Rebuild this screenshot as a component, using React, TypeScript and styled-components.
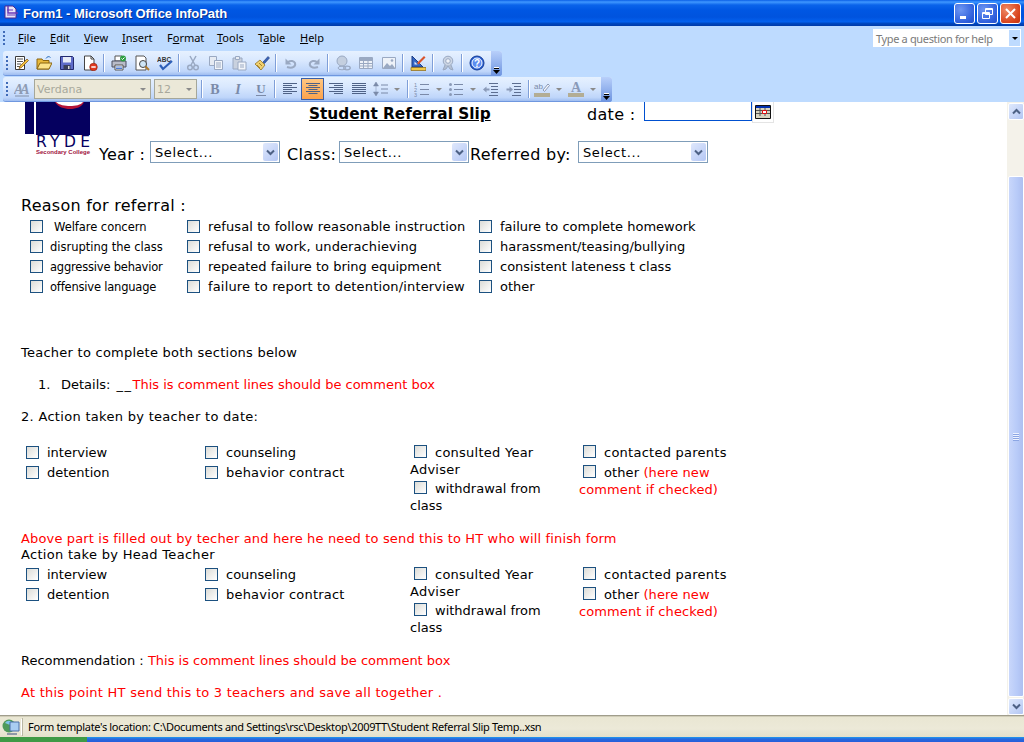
import React from "react";
import styled, { createGlobalStyle } from "styled-components";

const Global = createGlobalStyle`
  html, body { margin: 0; padding: 0; background: #fff; }
  #root { width: 1024px; height: 742px; overflow: hidden; }
`;

const Win = styled.div`
  width: 1024px; height: 742px; display: flex; flex-direction: column; overflow: hidden;
  font-family: "DejaVu Sans", Verdana, sans-serif; color: #000; background: #fff;
`;
const TitleBar = styled.div`
  height: 26px; flex: none; display: flex; align-items: center; padding: 0 3px 0 3px; box-sizing: border-box;
  background: linear-gradient(180deg,#0a5fe6 0,#3f97ff 2px,#0a63ea 5px,#0057e3 10px,#0053de 17px,#0461ef 22px,#0049c4 23px,#003aa8 26px);
`;
const TitleText = styled.span`
  margin-left: 4px; flex: 1; color: #fff; font: bold 13px "Liberation Sans", sans-serif; letter-spacing: -.05px;
  text-shadow: 1px 1px 0 #0a2f8c;
`;
const WinBtn = styled.div<{ $red?: boolean }>`
  width: 21px; height: 21px; margin-left: 2px; box-sizing: border-box; border: 1px solid #fff; border-radius: 3px;
  display: flex; align-items: center; justify-content: center;
  background: ${p => p.$red ? "radial-gradient(circle at 30% 30%,#ef8a66,#d8431c 70%,#c23210)" : "radial-gradient(circle at 30% 30%,#6d96f2,#2f5fdc 70%,#2450c8)"};
`;
const MenuBar = styled.div`
  height: 25px; flex: none; display: flex; align-items: center; background: #bedbff; position: relative; box-sizing: border-box; padding-bottom: 2px;
`;
const Grip = styled.div`
  width: 2px; height: 14px; margin: 0 1px 0 3px; flex: none;
  background: repeating-linear-gradient(180deg,#3f6bb8 0,#3f6bb8 2px,transparent 2px,transparent 4px);
`;
const MenuList = styled.div`display: flex; margin-left: 12px;`;
const MenuItem = styled.span<{ $w: number }>`
  width: ${p => p.$w}px; font: 11px "Noto Sans", sans-serif; flex: none; color: #000;
  u { text-decoration: underline; }
`;
const HelpBox = styled.div`
  position: absolute; left: 873px; top: 3px; width: 148px; height: 18px; background: #fff; display: flex; align-items: center;
  font: 11px "Noto Sans", sans-serif; letter-spacing: -.35px; color: #7a7a7a; box-sizing: border-box; padding-left: 3px;
`;
const HelpArrow = styled.div`
  margin-left: auto; margin-right: 1px; width: 11px; height: 16px; background: #bedbff; display: flex; align-items: center; justify-content: center;
`;
const Bars = styled.div`
  height: 51px; flex: none; background: #bedbff; display: flex; flex-direction: column; gap: 1px; align-items: flex-start; padding-left: 3px;
`;
const ToolBar = styled.div<{ $w: number }>`
  width: ${p => p.$w}px; height: 25px; flex: none; box-sizing: border-box; display: flex; align-items: center; position: relative;
  background: linear-gradient(180deg,#e6f1ff 0,#d9e8fe 40%,#bfd6fa 85%,#9fbdf0 100%);
  border-bottom: 1px solid #6f97df; border-radius: 3px;
`;
const Btn = styled.div<{ $on?: boolean; $w?: number }>`
  width: ${p => p.$w ?? 23}px; height: 22px; flex: none; display: flex; align-items: center; justify-content: center; box-sizing: border-box;
  ${p => p.$on ? "background: linear-gradient(180deg,#ffc782,#fca24b); border: 1px solid #3a5fa8;" : ""}
`;
const Sep = styled.div<{ $w?: number }>`
  width: ${p => p.$w ?? 7}px; height: 18px; flex: none; position: relative;
  &::after { content: ""; position: absolute; left: 50%; top: 0; bottom: 0; width: 1px; margin-left: -1px; background: #7f9fd8; box-shadow: 1px 0 0 #fff; }
`;
const Overflow = styled.div`
  position: absolute; right: 0; top: 0; bottom: -1px; width: 11px; border-radius: 0 3px 3px 0;
  background: linear-gradient(180deg,#b8cffa,#6d94e0); display: flex; align-items: flex-end; justify-content: center; padding-bottom: 2px; box-sizing: border-box;
`;
const FontBox = styled.div<{ $w: number }>`
  width: ${p => p.$w}px; height: 20px; flex: none; box-sizing: border-box; background: #ebe8d8; border: 1px solid #a5a79a; margin-right: 3px;
  display: flex; align-items: center; justify-content: space-between; padding: 0 4px 0 2px; font: 11px "DejaVu Sans", sans-serif; color: #a8a89c;
`;
const Tri = styled.span<{ $c?: string }>`
  width: 0; height: 0; border-left: 3px solid transparent; border-right: 3px solid transparent; border-top: 3px solid ${p => p.$c ?? "#8a8a8a"}; flex: none;
`;
const Main = styled.div`flex: 1; display: flex; min-height: 0;`;
const Doc = styled.div`flex: 1; padding-left: 21px; overflow: hidden; position: relative;`;
const ScrollBar = styled.div`
  width: 17px; flex: none; display: flex; flex-direction: column; background: #f4f2ea;
`;
const ScrollBtn = styled.div`
  height: 17px; width: 16px; margin: 1px 0 0 1px; box-sizing: border-box; border: 1px solid #fff; border-radius: 2px; flex: none;
  background: linear-gradient(135deg,#dfe9fd,#b3c6f3); display: flex; align-items: center; justify-content: center;
`;
const Thumb = styled.div`
  margin: 56px 0 0 1px; width: 16px; height: 521px; box-sizing: border-box; border: 1px solid #fff; border-radius: 2px; flex: none;
  background: linear-gradient(90deg,#c9d7fb,#b7caf8 60%,#aebff0); display: flex; align-items: center; justify-content: center;
`;
const ThumbGrip = styled.div`
  width: 6px; height: 8px; background: repeating-linear-gradient(180deg,#eef3ff 0,#eef3ff 1px,#8ca6e4 1px,#8ca6e4 2px);
`;
const Status = styled.div`
  height: 22px; flex: none; display: flex; align-items: center; box-sizing: border-box; border-top: 1px solid #a09d8c;
  background: linear-gradient(180deg,#e9e6d2,#ece9d8 60%,#e4e1cc); box-shadow: inset 0 1px 0 #d0cdb8;
`;
const StatusIcon = styled.div`width: 22px; display: flex; justify-content: center; flex: none;`;
const StatusText = styled.div`
  border-left: 1px solid #b9b6a3; height: 18px; padding-left: 5px; font: 11px/18px "Noto Sans", sans-serif; letter-spacing: -.33px; color: #000;
  box-shadow: -2px 0 0 -1px #fff;
`;
const Taskbar = styled.div`
  height: 5px; flex: none; display: flex;
  background: linear-gradient(180deg,#1f9bf0,#2a68dc 40%,#245edb);
`;
const StartEdge = styled.div`width: 87px; background: #3f9a46;`;

const Header = styled.div`height: 62px; display: flex; margin-left: 4px;`;
const HeadRight = styled.div`margin-left: 8px; display: flex; flex-direction: column;`;
const TitleRow = styled.div`height: 39px; display: flex; align-items: flex-start;`;
const FormTitle = styled.span`
  margin-left: 210px; width: 278px; margin-top: 2px; font: bold 15.3px/21px "DejaVu Sans", sans-serif; text-decoration: underline; white-space: nowrap;
`;
const DateLabel = styled.span`width: 57px; margin-top: 2px; font: 16px/21px "DejaVu Sans", sans-serif; letter-spacing: .3px; white-space: nowrap;`;
const DateInput = styled.div`width: 108px; height: 19px; box-sizing: border-box; border: 1px solid #0050d0; border-top: 0; background: #fff;`;
const CalBtn = styled.div`
  width: 22px; height: 21px; box-sizing: border-box; border: 1px solid #e4e4e4; border-top: 0; display: flex; align-items: center; justify-content: center;
`;
const SelRow = styled.div`display: flex; align-items: center; height: 22px; white-space: nowrap;`;
const SelLabel = styled.span<{ $w: number; $pl?: number }>`
  width: ${p => p.$w}px; padding-left: ${p => p.$pl ?? 0}px; box-sizing: border-box; font: 16px/22px "DejaVu Sans", sans-serif; letter-spacing: .3px; flex: none; padding-top: 5px;
`;
const Select = styled.div`
  width: 130px; height: 22px; box-sizing: border-box; border: 1px solid #7f9db9; background: #fff; flex: none; padding: 1px 1px 1px 4px;
  display: flex; align-items: center; justify-content: space-between; font: 13px "DejaVu Sans", sans-serif; letter-spacing: .6px;
`;
const SelBtn = styled.div`
  width: 15px; height: 18px; background: linear-gradient(135deg,#dfe8fc,#b4c7f5); border-radius: 2px; display: flex; align-items: center; justify-content: center;
`;
const Heading = styled.div`margin-top: 32px; font: 16px/20px "DejaVu Sans", sans-serif; letter-spacing: .25px;`;
const ReasonGrid = styled.div`
  margin: 0 0 0 9px; display: grid; grid-template-columns: 157px 292px 1fr; grid-auto-rows: 20px;
`;
const CheckRow = styled.label<{ $small?: boolean; $gap?: number; $ls?: number }>`
  display: flex; align-items: center; height: 20px; gap: ${p => p.$gap ?? 8}px; white-space: nowrap;
  font: ${p => p.$small ? "11.5px" : "13px"} "DejaVu Sans", sans-serif; letter-spacing: ${p => p.$ls ?? 0}px;
`;
const CheckLabel = styled.span<{ $small?: boolean }>`padding-top: ${p => p.$small ? 1 : 0}px;`;
const Box = styled.span<{ $inl?: boolean }>`
  width: 13px; height: 13px; box-sizing: border-box; border: 1px solid #1c5180; flex: none; background: linear-gradient(135deg,#dcdcd7,#fff);
  ${p => p.$inl ? "display: inline-block; margin: 0 8px 0 4px; vertical-align: -1px;" : "display: block;"}
`;
const Line = styled.div<{ $mt: number; $ml?: number; $red?: boolean; $ls?: number }>`
  margin-top: ${p => p.$mt}px; margin-left: ${p => p.$ml ?? 0}px; font: 13px/16px "DejaVu Sans", sans-serif; white-space: nowrap;
  letter-spacing: ${p => p.$ls ?? 0}px; color: ${p => p.$red ? "#ff0000" : "#000"};
`;
const ListNum = styled.span`display: inline-block; width: 23px;`;
const Blank = styled.span`margin-left: 6px; letter-spacing: 1.5px;`;
const Red = styled.span`color: #ff0000;`;
const Note = styled(Red)`letter-spacing: .1px;`;
const ActGrid = styled.div<{ $mt: number }>`
  margin-top: ${p => p.$mt}px; height: 72px; display: grid; grid-template-columns: 184px 205px 169px 170px;
`;
const Col = styled.div`padding-left: 5px;`;
const Para = styled.div<{ $pt?: number; $ls?: number }>`
  font: 13px/17px "DejaVu Sans", sans-serif; letter-spacing: ${p => p.$ls ?? .25}px; padding-top: ${p => p.$pt ?? 2}px; width: 160px;
`;

const S = { width: 16, height: 16, viewBox: "0 0 16 16", fill: "none" } as const;
const G = "#9aa9c2";
const Ico = {
  New: () => <svg {...S}><path d="M2.5 1.5h9v13h-9z" fill="#fff" stroke="#3a3a3a"/><path d="M4 4h6M4 6.5h6M4 9h4M4 11.5h3" stroke="#555"/><path d="M7 11l7-7 1.5 1.5-7 7-2.5 1z" fill="#f2c23e" stroke="#7a4a10" strokeWidth=".7"/></svg>,
  Open: () => <svg {...S}><path d="M1 4h5l1 1.5h6V14H1z" fill="#e8b93c" stroke="#8a6510"/><path d="M1 14l3-6h12l-3 6z" fill="#fbe38a" stroke="#8a6510"/><path d="M10 3.5c1-2 3-2.5 4.5-1" stroke="#2c6fc0"/></svg>,
  Save: () => <svg {...S}><path d="M1.5 1.5h12l1 1v12h-13z" fill="#5f6cc9" stroke="#23296e"/><path d="M4 2h8v5.5H4z" fill="#e8ecf8"/><path d="M4.5 10h7v4.5h-7z" fill="#3a3f5a"/><path d="M9 11h1.5v3H9z" fill="#ddd"/></svg>,
  Del: () => <svg {...S}><path d="M2.5 1h6.5l3 3v11h-9.500z" fill="#fff" stroke="#444"/><path d="M9 1v3h3" stroke="#444"/><circle cx="11.500" cy="12" r="3.800" fill="#e0391f" stroke="#8c1c0c" strokeWidth=".6"/><path d="M9.300 12h4.400" stroke="#fff" strokeWidth="1.500"/></svg>,
  Print: () => <svg {...S}><path d="M4 1h7v5H4z" fill="#fff" stroke="#555"/><path d="M1 6h14v6H1z" fill="#b9bcc8" stroke="#4a4f60"/><path d="M4 10h8v5H4z" fill="#fff" stroke="#555"/><path d="M5 12h6M5 13.500h6" stroke="#4d7ad0"/><circle cx="12" cy="3.500" r="3" fill="#2f9e44"/><path d="M10.500 3.500l1 1 2-2" stroke="#fff"/></svg>,
  Preview: () => <svg {...S}><path d="M2 1h8l2 2v12H2z" fill="#fff" stroke="#555"/><circle cx="9" cy="9" r="3.500" fill="#cfe6f7" stroke="#444"/><path d="M11.500 11.500l3.500 3.500" stroke="#b07a2a" strokeWidth="2"/></svg>,
  Spell: () => <svg {...S}><text x="0" y="6.500" fontFamily="Liberation Sans" fontSize="6.500" fontWeight="700" fill="#333">ABC</text><path d="M3 10l3 4 9-8" stroke="#2d5fb8" strokeWidth="2.200"/></svg>,
  Cut: () => <svg {...S}><path d="M5 1l5 9M11 1l-5 9" stroke={G} strokeWidth="1.500"/><circle cx="5" cy="12.500" r="2.300" stroke={G} strokeWidth="1.500"/><circle cx="11" cy="12.500" r="2.300" stroke={G} strokeWidth="1.500"/></svg>,
  Copy: () => <svg {...S}><path d="M1.500 1.500h7v9h-7z" fill="#e6ebf3" stroke={G}/><path d="M6.500 5.500h8v9h-8z" fill="#f2f5fa" stroke={G}/><path d="M8 8h5M8 10h5M8 12h5" stroke={G}/></svg>,
  Paste: () => <svg {...S}><path d="M2 3h9v11H2z" fill="#c9d1de" stroke={G}/><path d="M4.500 1.500h4v3h-4z" fill="#e8ecf3" stroke={G}/><path d="M7 7h8v8H7z" fill="#f2f5fa" stroke={G}/><path d="M9 10h4M9 12h4" stroke={G}/></svg>,
  Brush: () => <svg {...S}><path d="M9 7l5-5.500 1.500 1.500-5 5.500z" fill="#3a63b8" stroke="#1f3a78" strokeWidth=".6"/><path d="M6 5l5 5-4 5-6-6z" fill="#f0d070" stroke="#8a6510" strokeWidth=".7"/><path d="M3 10l3 3M5 8l3 3" stroke="#8a6510" strokeWidth=".7"/></svg>,
  Undo: () => <svg {...S}><path d="M4 12c6 2 9-1 8-4-1-2-4-3-7-1" stroke={G} strokeWidth="2"/><path d="M2.500 3.500v6h6z" fill={G}/></svg>,
  Redo: () => <svg {...S}><path d="M12 12c-6 2-9-1-8-4 1-2 4-3 7-1" stroke={G} strokeWidth="2"/><path d="M13.500 3.500v6h-6z" fill={G}/></svg>,
  Link: () => <svg {...S}><circle cx="7" cy="6" r="5" fill="#c4cfdf" stroke={G}/><ellipse cx="7" cy="13" rx="4" ry="1.800" stroke={G}/><ellipse cx="12" cy="13" rx="3.300" ry="1.800" stroke={G} strokeWidth="1.300"/></svg>,
  Table: () => <svg {...S}><path d="M1.500 2.500h13v11h-13z" fill="#eef2f8" stroke={G}/><path d="M1.500 5.500h13M1.500 8.500h13M1.500 11h13M5.500 2.500v11M10 2.500v11" stroke={G}/><path d="M2 3h12v2H2z" fill={G}/></svg>,
  Image: () => <svg {...S}><path d="M1.500 2.500h13v11h-13z" fill="#eef2f8" stroke={G}/><path d="M2 13l4-5 3 3 2-2 3 4z" fill={G}/><circle cx="11" cy="5.500" r="1.300" fill={G}/></svg>,
  Design: () => <svg {...S}><path d="M2 1v11h11z" fill="#3566c4" stroke="#1c3d85"/><path d="M4.500 6.500v3h3z" fill="#d9e6fb"/><path d="M7 8l7-7 1.500 1.500-7 7z" fill="#d9542c"/><path d="M1 12.500h15v3H1z" fill="#f0c94a" stroke="#8a6510" strokeWidth=".7"/></svg>,
  Cert: () => <svg {...S}><circle cx="8" cy="6" r="4.800" fill="#cdd6e4" stroke={G}/><circle cx="8" cy="6" r="2.300" fill="#f0f3f8" stroke={G}/><path d="M5 10l-2 5 3-1 2-3 2 3 3 1-2-5" fill="#b3bfd2" stroke={G}/></svg>,
  Help: () => <svg {...S}><circle cx="8" cy="8" r="7" fill="#2c63d6" stroke="#123a94"/><circle cx="8" cy="8" r="5" fill="#5d8df0" stroke="#fff"/><text x="8" y="11.500" textAnchor="middle" fontFamily="Liberation Sans" fontSize="10" fontWeight="700" fill="#fff">?</text></svg>,
  Style: () => <svg {...S}><text x="0" y="13" fontFamily="Liberation Serif" fontSize="14" fontStyle="italic" fontWeight="700" fill="#8e9bb3" letterSpacing="-3">AA</text><path d="M1 15h14" stroke="#8290a8"/></svg>,
};
const tg = { fontFamily: "Liberation Serif", fontSize: 14, fontWeight: 700, fill: "#7b8aa8" } as const;
const Fmt = {
  B: () => <svg {...S}><text x="8" y="13" textAnchor="middle" {...tg}>B</text></svg>,
  I: () => <svg {...S}><text x="8" y="13" textAnchor="middle" {...tg} fontStyle="italic">I</text></svg>,
  U: () => <svg {...S}><text x="8" y="12" textAnchor="middle" {...tg} fontSize={13}>U</text><path d="M3 14.500h10" stroke="#7b8aa8"/></svg>,
};
const Align = ({ k }: { k: number }) => {
  const ys = [2.5, 4.5, 6.5, 8.5, 10.5, 12.5];
  return <svg {...S}>{ys.map((y, i) => {
    const l = k === 3 || i % 2 === 0 ? 14 : 9;
    const x = k === 1 ? 8 - l / 2 : k === 2 ? 15 - l : 1;
    return <path key={y} d={`M${x} ${y}h${l}`} stroke="#4f6286"/>;
  })}</svg>;
};
const LineSp = () => <svg {...S}><path d="M4 1L1.500 5h5zM4 15l-2.500-4h5zM4 5v6" fill="#7b8aa8" stroke="#7b8aa8" strokeWidth=".5"/><path d="M9 4h7M9 8h7M9 12h7" stroke="#7b8aa8"/></svg>;
const Num = () => <svg {...S}><text x="0" y="5.500" fontSize="5.500" fontFamily="Liberation Sans" fill="#7b8aa8">1</text><text x="0" y="10.500" fontSize="5.500" fontFamily="Liberation Sans" fill="#7b8aa8">2</text><text x="0" y="15.500" fontSize="5.500" fontFamily="Liberation Sans" fill="#7b8aa8">3</text><path d="M6 3.500h9M6 8.500h9M6 13.500h9" stroke="#7b8aa8"/></svg>;
const Bul = () => <svg {...S}><circle cx="2.500" cy="3.500" r="1.500" fill="#8a9ab8"/><circle cx="2.500" cy="8.500" r="1.500" fill="#8a9ab8"/><circle cx="2.500" cy="13.500" r="1.500" fill="#8a9ab8"/><path d="M6 3.500h9M6 8.500h9M6 13.500h9" stroke="#7b8aa8"/></svg>;
const Outd = () => <svg {...S}><path d="M6 2.500h9M8 5.500h7M8 8.500h7M8 11.500h7M6 14.500h9" stroke="#5d6e90"/><path d="M0 8.500l3.500-3v2h3v2h-3v2z" fill="#8a9ab8"/></svg>;
const Ind = () => <svg {...S}><path d="M6 2.500h9M8 5.500h7M8 8.500h7M8 11.500h7M6 14.500h9" stroke="#5d6e90"/><path d="M7 8.500l-3.500-3v2h-3v2h3v2z" fill="#8a9ab8"/></svg>;
const Hi = () => <svg {...S}><text x="0" y="8" fontSize="8" fontFamily="Liberation Sans" fill="#7b8aa8">ab</text><path d="M9 9l5-6 1.500 1.500-5 6z" stroke="#8a9ab8" fill="#f2f5fa"/><path d="M0 12h16v4H0z" fill="#b3ad94"/></svg>;
const Col2 = () => <svg {...S}><text x="8" y="11" textAnchor="middle" fontFamily="Liberation Serif" fontSize="14" fontWeight="700" fill="#8a9ab8">A</text><path d="M0 12h16v4H0z" fill="#b3ad94"/></svg>;
const OverIco = () => <svg width="7" height="7" viewBox="0 0 7 7"><path d="M1 0h5v1H1z" fill="#fff"/><path d="M1 1h5v1H1zM0 3h7L3.500 7z" fill="#000"/></svg>;
const Chev = ({ up }: { up?: boolean }) => <svg width="9" height="7" viewBox="0 0 9 7"><path d={up ? "M1 5.500l3.500-3.500 3.500 3.500" : "M1 1.500l3.500 3.500 3.500-3.500"} stroke="#4d6185" strokeWidth="2" fill="none"/></svg>;

const Logo = () => (
  <svg width="66" height="62" viewBox="0 0 66 62">
    <path d="M0 0h9v32H0z" fill="#05005f"/>
    <path d="M11 0h54v33H11z" fill="#05005f"/>
    <path d="M30 0h29c-2 5-8 7-14 7s-12-2-15-7z" fill="#b31237"/>
    <path d="M31 0h27c-2 3-8 4-13 4s-11-1-14-4z" fill="#fff"/>
    <text x="11" y="45" fontFamily="DejaVu Sans" fontSize="15.500" fill="#05005f" textLength="54">RYDE</text>
    <text x="11" y="52" fontFamily="Liberation Sans" fontSize="6" fontWeight="700" fill="#a01040" textLength="54" lengthAdjust="spacingAndGlyphs">Secondary College</text>
  </svg>
);

const Cal = () => (
  <svg width="16" height="14" viewBox="0 0 16 14">
    <path d="M.5.500h15v13H.5z" fill="#d8d4c0" stroke="#111"/>
    <path d="M1 1h14v2H1z" fill="#0030b0"/>
    <path d="M1 5.500h14M1 8.500h14M5 3v8M10 3v8" stroke="#555"/>
    <path d="M7.500 5.500h4v3h-4z" stroke="#e01010" fill="#fff"/>
  </svg>
);

const Check = ({ children, small, gap, ls }: { children: React.ReactNode; small?: boolean; gap?: number; ls?: number }) => (
  <CheckRow $small={small} $gap={gap} $ls={ls}><Box /><CheckLabel $small={small}>{children}</CheckLabel></CheckRow>
);

const Actions = ({ mt }: { mt: number }) => (
  <ActGrid $mt={mt}>
    <Col><Check>interview</Check><Check>detention</Check></Col>
    <div><Check>counseling</Check><Check ls={.2}>behavior contract</Check></div>
    <div>
      <Para><Box $inl />consulted Year Adviser</Para>
      <Para $ls={0}><Box $inl />withdrawal from class</Para>
    </div>
    <div>
      <Para><Box $inl />contacted parents</Para>
      <Para $pt={3} $ls={.1}><Box $inl />other <Note>(here new</Note><br /><Note>comment if checked)</Note></Para>
    </div>
  </ActGrid>
);

const menus: [string, string, string, number][] = [
  ["", "F", "ile", 32], ["", "E", "dit", 34], ["", "V", "iew", 38], ["", "I", "nsert", 45], ["F", "o", "rmat", 50],
  ["", "T", "ools", 41], ["T", "a", "ble", 42], ["", "H", "elp", 40],
];

export default function App() {
  return (
    <Win>
      <Global />
      <TitleBar>
        <svg width="16" height="16" viewBox="0 0 16 16">
          <path d="M2 1h8l3 3v9H2z" fill="#e8e4f8" stroke="#4a2a90"/>
          <path d="M5 1v7h10" stroke="#6a3ab8" strokeWidth="1.500" fill="none"/>
          <path d="M4 5h6M4 10h8" stroke="#6a3ab8"/>
        </svg>
        <TitleText>Form1 - Microsoft Office InfoPath</TitleText>
        <WinBtn><svg width="11" height="11" viewBox="0 0 11 11"><path d="M1 8h6v3H1z" fill="#fff"/></svg></WinBtn>
        <WinBtn><svg width="13" height="13" viewBox="0 0 13 13" fill="none" stroke="#fff"><path d="M4.500 1.500h7v6h-7zM4.500 2.500h7" /><path d="M1.500 5.500h7v6h-7zM1.500 6.500h7" /></svg></WinBtn>
        <WinBtn $red><svg width="13" height="13" viewBox="0 0 13 13"><path d="M2 2l9 9M11 2l-9 9" stroke="#fff" strokeWidth="2"/></svg></WinBtn>
      </TitleBar>
      <MenuBar>
        <Grip />
        <MenuList>
          {menus.map(([a, b, c, w]) => <MenuItem key={b + c} $w={w}>{a}<u>{b}</u>{c}</MenuItem>)}
        </MenuList>
        <HelpBox>Type a question for help<HelpArrow><Tri $c="#000" /></HelpArrow></HelpBox>
      </MenuBar>
      <Bars>
        <ToolBar $w={499}>
          <Grip />
          <Btn><Ico.New /></Btn><Btn><Ico.Open /></Btn><Btn><Ico.Save /></Btn><Btn><Ico.Del /></Btn><Sep $w={6} />
          <Btn><Ico.Print /></Btn><Btn><Ico.Preview /></Btn><Btn><Ico.Spell /></Btn><Sep $w={5} />
          <Btn><Ico.Cut /></Btn><Btn><Ico.Copy /></Btn><Btn><Ico.Paste /></Btn><Btn><Ico.Brush /></Btn><Sep $w={6} />
          <Btn><Ico.Undo /></Btn><Btn><Ico.Redo /></Btn><Sep $w={6} />
          <Btn><Ico.Link /></Btn><Btn><Ico.Table /></Btn><Btn><Ico.Image /></Btn><Sep $w={6} />
          <Btn><Ico.Design /></Btn><Sep $w={7} /><Btn><Ico.Cert /></Btn><Sep $w={6} /><Btn><Ico.Help /></Btn>
          <Overflow><OverIco /></Overflow>
        </ToolBar>
        <ToolBar $w={609}>
          <Grip />
          <Btn $w={25}><Ico.Style /></Btn>
          <FontBox $w={117}>Verdana<Tri /></FontBox>
          <FontBox $w={43}>12<Tri /></FontBox>
          <Sep $w={3} />
          <Btn><Fmt.B /></Btn><Btn><Fmt.I /></Btn><Btn><Fmt.U /></Btn><Sep $w={6} />
          <Btn><Align k={0} /></Btn><Btn $on><Align k={1} /></Btn><Btn><Align k={2} /></Btn><Btn><Align k={3} /></Btn>
          <Btn $w={20}><LineSp /></Btn><Btn $w={14}><Tri /></Btn><Sep $w={8} />
          <Btn $w={20}><Num /></Btn><Btn $w={13}><Tri /></Btn>
          <Btn $w={21}><Bul /></Btn><Btn $w={13}><Tri /></Btn>
          <Btn><Outd /></Btn><Btn><Ind /></Btn><Sep $w={7} />
          <Btn $w={20}><Hi /></Btn><Btn $w={13}><Tri /></Btn>
          <Btn $w={22}><Col2 /></Btn><Btn $w={12}><Tri /></Btn>
          <Overflow><OverIco /></Overflow>
        </ToolBar>
      </Bars>
      <Main>
        <Doc>
          <Header>
            <Logo />
            <HeadRight>
              <TitleRow>
                <FormTitle>Student Referral Slip</FormTitle>
                <DateLabel>date :</DateLabel>
                <DateInput />
                <CalBtn><Cal /></CalBtn>
              </TitleRow>
              <SelRow>
                <SelLabel $w={51}>Year :</SelLabel>
                <Select>Select...<SelBtn><Chev /></SelBtn></Select>
                <SelLabel $w={59} $pl={7}>Class:</SelLabel>
                <Select>Select...<SelBtn><Chev /></SelBtn></Select>
                <SelLabel $w={109} $pl={1}>Referred by:</SelLabel>
                <Select>Select...<SelBtn><Chev /></SelBtn></Select>
              </SelRow>
            </HeadRight>
          </Header>
          <Heading>Reason for referral :</Heading>
          <ReasonGrid>
            <Check small gap={11} ls={-.05}>Welfare concern</Check>
            <Check ls={.1}>refusal to follow reasonable instruction</Check>
            <Check>failure to complete homework</Check>
            <Check small gap={7}>disrupting the class</Check>
            <Check ls={.1}>refusal to work, underachieving</Check>
            <Check>harassment/teasing/bullying</Check>
            <Check small gap={7} ls={-.2}>aggressive behavior</Check>
            <Check>repeated failure to bring equipment</Check>
            <Check>consistent lateness t class</Check>
            <Check small gap={7} ls={-.2}>offensive language</Check>
            <Check ls={.16}>failure to report to detention/interview</Check>
            <Check>other</Check>
          </ReasonGrid>
          <Line $mt={49} $ls={.25}>Teacher to complete both sections below</Line>
          <Line $mt={16} $ml={17}><ListNum>1.</ListNum>Details:<Blank>__</Blank><Red>This is comment lines should be comment box</Red></Line>
          <Line $mt={16} $ls={.3}>2. Action taken by teacher to date:</Line>
          <Actions mt={17} />
          <Line $mt={17} $red $ls={.15}>Above part is filled out by techer and here he need to send this to HT who will finish form</Line>
          <Line $mt={0} $ls={.3}>Action take by Head Teacher</Line>
          <Actions mt={1} />
          <Line $mt={17}>Recommendation : <Red>This is comment lines should be comment box</Red></Line>
          <Line $mt={16} $red $ls={.25}>At this point HT send this to 3 teachers and save all together .</Line>
        </Doc>
        <ScrollBar>
          <ScrollBtn><Chev up /></ScrollBtn>
          <Thumb><ThumbGrip /></Thumb>
          <ScrollBtn><Chev /></ScrollBtn>
        </ScrollBar>
      </Main>
      <Status>
        <StatusIcon>
          <svg width="18" height="18" viewBox="0 0 18 18">
            <circle cx="7" cy="8" r="6.500" fill="#4f9a5a"/>
            <path d="M3 5c2-3 6-3 7 0-2 3-4 1-7 0z" fill="#7fc4e8"/>
            <path d="M8 4h9v9H8z" fill="#a9cdf2" stroke="#4a6fa8"/>
            <path d="M5 15h10v2H5z" fill="#8e98a8"/>
          </svg>
        </StatusIcon>
        <StatusText>Form template's location: C:\Documents and Settings\rsc\Desktop\2009TT\Student Referral Slip Temp..xsn</StatusText>
      </Status>
      <Taskbar><StartEdge /></Taskbar>
    </Win>
  );
}
